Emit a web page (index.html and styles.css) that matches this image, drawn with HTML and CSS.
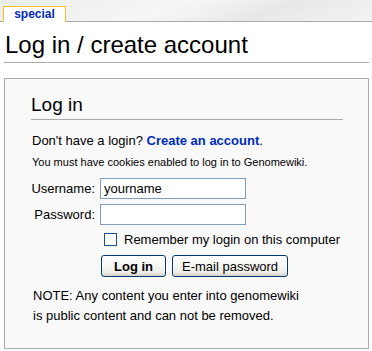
FILE: index.html
```html
<!DOCTYPE html>
<html lang="en">
<head>
  <meta charset="UTF-8">
  <title>Log in / create account - Genomewiki</title>
  <link rel="stylesheet" href="styles.css">
</head>
<body>
  <div class="top">
    <div class="tab">special</div>
  </div>
  <div class="content">
    <h1>Log in / create account</h1>

    <form class="login-box">
      <h2>Log in</h2>
      <p class="nologin">Don't have a login? <a href="#">Create an account</a>.</p>
      <p class="cookies">You must have cookies enabled to log in to Genomewiki.</p>

      <div class="fields">
        <label for="name">Username:</label>
        <input id="name" type="text" value="yourname">
        <label for="pass">Password:</label>
        <input id="pass" type="password">
      </div>

      <div class="remember">
        <input id="remember" type="checkbox">
        <label for="remember">Remember my login on this computer</label>
      </div>

      <div class="buttons">
        <button type="button" class="btn btn-main">Log in</button>
        <button type="button" class="btn">E-mail password</button>
      </div>

      <p class="note">NOTE: Any content you enter into genomewiki<br>is public content and can not be removed.</p>
    </form>
  </div>
</body>
</html>
```

FILE: styles.css
```css
body {
  margin: 0;
  font-family: 'Liberation Sans', Arial, sans-serif;
  font-size: 13px;
  color: black;
  background: white;
}

.top {
  height: 21px;
  background: linear-gradient(160deg, #ececec, #f6f6f6 45%, #e8e8e8 70%, #f3f3f3);
  border-bottom: 1px solid #aaa;
  display: flex;
  align-items: flex-end;
  padding-left: 3px;
}

.tab {
  width: 61px;
  height: 15px;
  margin-bottom: -1px;
  background: white;
  border: 1px solid #fabd23;
  border-bottom: none;
  color: #002bb8;
  font-weight: bold;
  font-size: 12px;
  text-align: center;
  line-height: 15px;
}

.content {
  padding: 0 3px 0 4px;
}

h1 {
  font-weight: normal;
  font-size: 24px;
  margin: 0;
  padding: 10px 0 4px 1px;
  border-bottom: 1px solid #aaa;
  line-height: 26px;
}

.login-box {
  margin-top: 15px;
  border: 1px solid #aaa;
  background: #f9f9f9;
  padding: 15px 25px 22px 26px;
}

h2 {
  font-weight: normal;
  font-size: 19px;
  margin: 0;
  padding-bottom: 3px;
  border-bottom: 1px solid #aaa;
  line-height: 22px;
}

.nologin {
  margin: 13px 0 0 1px;
}

.nologin a {
  color: #002bb8;
  font-weight: bold;
  text-decoration: none;
}

.cookies {
  font-size: 11px;
  margin: 8px 0 0 1px;
}

.fields {
  display: grid;
  grid-template-columns: 64px 146px;
  column-gap: 5px;
  row-gap: 5px;
  align-items: center;
  margin-top: 10px;
}

.fields label {
  text-align: right;
}

.fields input {
  height: 21px;
  box-sizing: border-box;
  border: 1px solid #7f9db9;
  background: white;
  font-family: 'Liberation Sans', Arial, sans-serif;
  font-size: 13px;
  padding: 1px 3px;
  margin: 0;
}

.remember {
  display: flex;
  align-items: center;
  margin: 7px 0 0 73px;
}

.remember input {
  appearance: none;
  width: 13px;
  height: 13px;
  margin: 0 7px 0 0;
  border: 1px solid #1c5180;
  background: white;
}

.buttons {
  display: flex;
  gap: 6px;
  margin: 8px 0 0 70px;
}

.btn {
  height: 22px;
  padding: 0 9px;
  border: 1px solid #003c74;
  border-radius: 3px;
  background: linear-gradient(#ffffff, #f0f0ea 80%, #d6d0c5);
  font-family: 'Liberation Sans', Arial, sans-serif;
  font-size: 13px;
  color: black;
}

.btn-main {
  font-weight: bold;
  width: 65px;
}

.note {
  margin: 9px 0 0 2px;
  line-height: 20px;
}
```
